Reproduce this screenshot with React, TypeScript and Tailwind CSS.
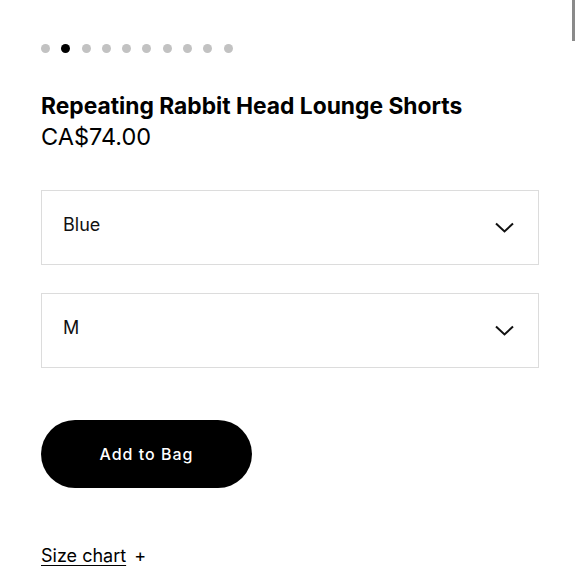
import React from "react";

const Chevron: React.FC = () => (
    <svg width="19" height="11" viewBox="0 0 19 11" fill="none" className="shrink-0">
        <path d="M1 1.5L9.5 9.5L18 1.5" stroke="#111" strokeWidth="2" />
    </svg>
);

const SelectBox: React.FC<{ value: string }> = ({ value }) => (
    <div className="flex h-[75px] items-center justify-between border border-[#dcdcdc] pl-[21px] pr-[24px]">
        <span className="-mt-[6px] text-[18px] text-[#111]">{value}</span>
        <Chevron />
    </div>
);

const App: React.FC = () => {
    const dots = [0, 1, 2, 3, 4, 5, 6, 7, 8, 9];

    return (
        <div className="relative h-[580px] w-[580px] overflow-hidden bg-white font-['Inter',sans-serif] text-black">
            <div className="absolute right-[5px] top-0 h-[41px] w-[3px] bg-[#8a8a8a]" />

            <div className="px-[41px] pt-[44px]">
                <div className="flex gap-[11.3px]">
                    {dots.map((d) => (
                        <span
                            key={d}
                            className={d === 1 ? "h-[9px] w-[9px] rounded-full bg-black" : "h-[9px] w-[9px] rounded-full bg-[#c2c2c2]"}
                        />
                    ))}
                </div>

                <h1 className="mt-[39px] text-[22.8px] font-bold leading-[28px]">
                    Repeating Rabbit Head Lounge Shorts
                </h1>
                <p className="mt-[3px] text-[23.5px] leading-[28px]">CA$74.00</p>

                <div className="mt-[39px] flex flex-col gap-[28px]">
                    <SelectBox value="Blue" />
                    <SelectBox value="M" />
                </div>

                <button className="mt-[52px] flex h-[68px] w-[211px] items-center justify-center rounded-full bg-black text-[16px] font-medium tracking-[1px] text-white">
                    Add to Bag
                </button>

                <div className="mt-[54px] flex items-center gap-[8px] text-[18px]">
                    <span className="underline underline-offset-[3px]">Size chart</span>
                    <span>+</span>
                </div>
            </div>
        </div>
    );
};

export default App;
